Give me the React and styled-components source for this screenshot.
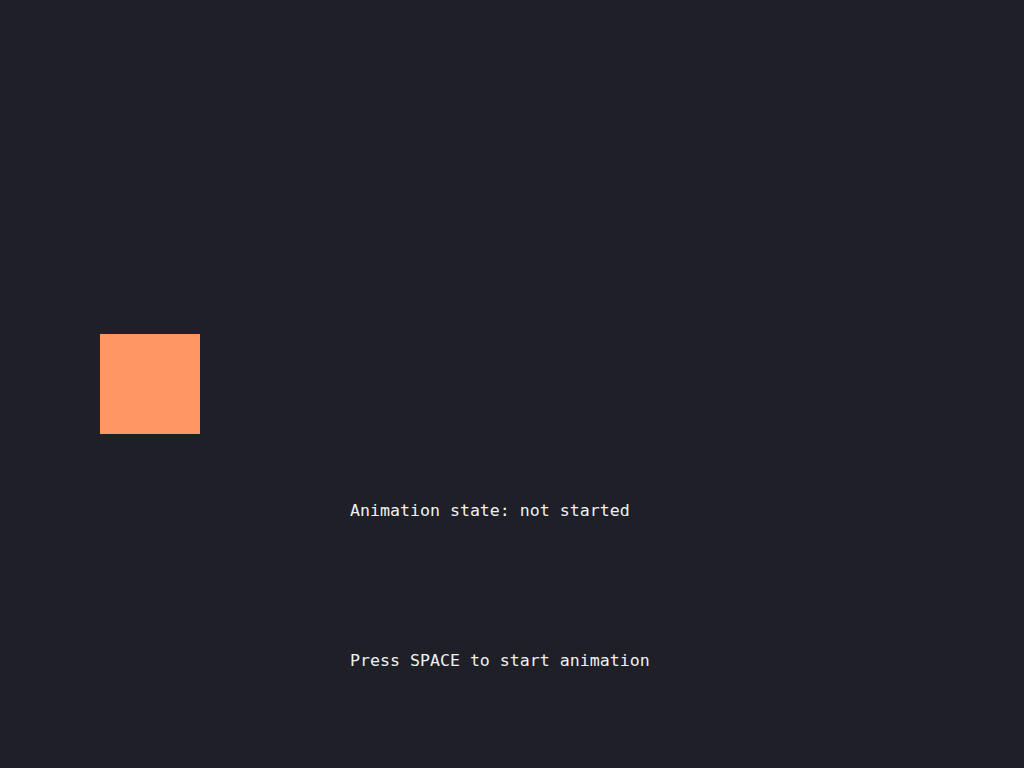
import React from 'react'
import styled, { createGlobalStyle } from 'styled-components'

const GlobalStyle = createGlobalStyle`
  html, body {
    margin: 0;
    padding: 0;
    background: #1f1f28;
  }
`

const Stage = styled.div`
  position: relative;
  width: 100vw;
  height: 100vh;
  overflow: hidden;
  background: #1f1f28;
  font-family: "DejaVu Sans Mono", "Liberation Mono", monospace;
`

// the animated box sits on a free canvas, its place is the content
const Box = styled.div`
  position: absolute;
  left: 100px;
  top: 334px;
  width: 100px;
  height: 100px;
  background: #ff9664;
`

const Info = styled.div`
  display: flex;
  flex-direction: column;
  gap: 130px;
  padding: 501px 0 0 350px;
`

const Line = styled.div`
  font-size: 16.6px;
  line-height: 20px;
  color: #f0f0f0;
  white-space: pre;
`

const App = () => {
  return (
    <>
      <GlobalStyle />
      <Stage>
        <Box />
        <Info>
          <Line>Animation state: not started</Line>
          <Line>Press SPACE to start animation</Line>
        </Info>
      </Stage>
    </>
  )
}

export default App
